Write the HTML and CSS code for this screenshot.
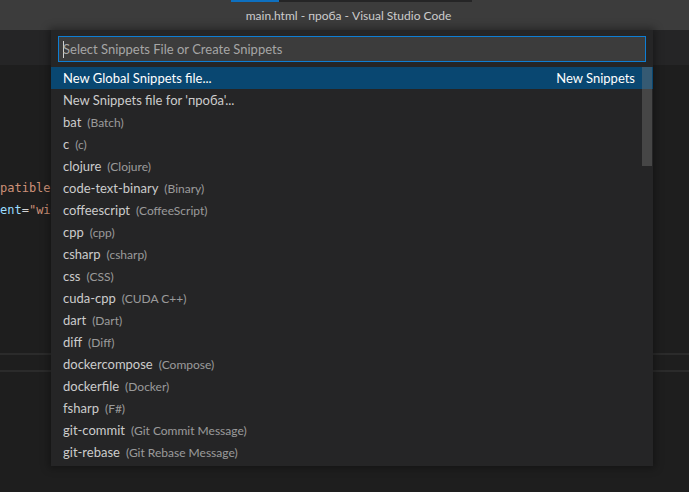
FILE: index.html
```html
<!DOCTYPE html>
<html>
<head>
<meta charset="utf-8">
<link rel="stylesheet" href="styles.css">
</head>
<body>
<div class="window">
  <header class="titlebar">
    <div class="strip"><span class="strip-active"></span></div>
    <div class="title">main.html - проба - Visual Studio Code</div>
  </header>
  <div class="tabbar"></div>
  <main class="editor">
    <div class="code">
      <div class="line"><span class="str">patible"</span></div>
      <div class="line"><span class="attr">ent</span><span class="op">=</span><span class="str">"wid</span></div>
    </div>
  </main>
  <div class="panel-sep"></div>
  <div class="panel-head"></div>
  <div class="panel-sep"></div>
  <div class="panel"></div>

  <div class="quick-input">
    <div class="input-box">
      <span class="caret"></span><span class="placeholder">Select Snippets File or Create Snippets</span>
    </div>
    <div class="list">
      <div class="row selected"><span class="label">New Global Snippets file...</span><span class="sep-label">New Snippets</span></div>
      <div class="row"><span class="label">New Snippets file for 'проба'...</span></div>
      <div class="row"><span class="label">bat</span><span class="desc">(Batch)</span></div>
      <div class="row"><span class="label">c</span><span class="desc">(c)</span></div>
      <div class="row"><span class="label">clojure</span><span class="desc">(Clojure)</span></div>
      <div class="row"><span class="label">code-text-binary</span><span class="desc">(Binary)</span></div>
      <div class="row"><span class="label">coffeescript</span><span class="desc">(CoffeeScript)</span></div>
      <div class="row"><span class="label">cpp</span><span class="desc">(cpp)</span></div>
      <div class="row"><span class="label">csharp</span><span class="desc">(csharp)</span></div>
      <div class="row"><span class="label">css</span><span class="desc">(CSS)</span></div>
      <div class="row"><span class="label">cuda-cpp</span><span class="desc">(CUDA C++)</span></div>
      <div class="row"><span class="label">dart</span><span class="desc">(Dart)</span></div>
      <div class="row"><span class="label">diff</span><span class="desc">(Diff)</span></div>
      <div class="row"><span class="label">dockercompose</span><span class="desc">(Compose)</span></div>
      <div class="row"><span class="label">dockerfile</span><span class="desc">(Docker)</span></div>
      <div class="row"><span class="label">fsharp</span><span class="desc">(F#)</span></div>
      <div class="row"><span class="label">git-commit</span><span class="desc">(Git Commit Message)</span></div>
      <div class="row"><span class="label">git-rebase</span><span class="desc">(Git Rebase Message)</span></div>
      <div class="scroll-slider"></div>
    </div>
  </div>
</div>
</body>
</html>
```
FILE: styles.css
```css
html, body {
  margin: 0;
  padding: 0;
  background: #1e1e1e;
}
.window {
  position: relative;
  width: 689px;
  height: 492px;
  overflow: hidden;
  display: flex;
  flex-direction: column;
  font-family: Lato, "Noto Sans", sans-serif;
}
.titlebar {
  height: 30px;
  background: #3c3c3c;
  display: flex;
  flex-direction: column;
  flex: none;
}
.strip {
  margin-left: 231px;
  width: 241px;
  height: 2px;
  background: #252526;
  display: flex;
}
.strip-active {
  width: 48px;
  background: #0e70c0;
}
.title {
  flex: 1;
  display: flex;
  align-items: center;
  justify-content: center;
  color: #cccccc;
  font-size: 12px;
  padding-bottom: 2px;
  padding-left: 8px;
}
.tabbar {
  height: 35px;
  background: #252526;
  flex: none;
}
.editor {
  height: 288px;
  flex: none;
  background: #1e1e1e;
  padding-top: 112px;
  box-sizing: border-box;
}
.code {
  font-family: "DejaVu Sans Mono", monospace;
  font-size: 12px;
}
.line {
  height: 22px;
  line-height: 22px;
  white-space: pre;
}
.str { color: #ce9178; }
.attr { color: #9cdcfe; }
.op { color: #d4d4d4; }
.panel-sep {
  height: 2px;
  background: #2b2b2b;
  flex: none;
}
.panel-head {
  height: 15px;
  background: #1e1e1e;
  flex: none;
}
.panel {
  flex: 1;
  background: #1e1e1e;
}
.quick-input {
  position: absolute;
  left: 51px;
  top: 30px;
  width: 602px;
  background: #252526;
  box-shadow: 0 0 8px 2px rgba(0, 0, 0, 0.36);
  padding: 6px 0 3px 0;
  box-sizing: border-box;
}
.input-box {
  margin: 0 7px;
  height: 26px;
  box-sizing: border-box;
  border: 1px solid #0e7ed4;
  background: #3c3c3c;
  display: flex;
  align-items: center;
  padding-left: 4px;
  font-size: 13px;
}
.caret {
  width: 1px;
  height: 17px;
  background: #d0d0d0;
  margin-right: -1px;
}
.placeholder {
  color: #a6a6a6;
}
.list {
  position: relative;
  margin-top: 5px;
}
.row {
  height: 22px;
  display: flex;
  align-items: center;
  padding: 0 18px 0 12px;
  font-size: 13px;
  color: #cccccc;
}
.row.selected {
  background: #094771;
  color: #ffffff;
}
.desc {
  margin-left: 6px;
  font-size: 12px;
  opacity: 0.7;
}
.sep-label {
  margin-left: auto;
  color: #ffffff;
}
.scroll-slider {
  position: absolute;
  right: 1px;
  top: 0;
  width: 10px;
  height: 99px;
  background: rgba(121, 121, 121, 0.4);
}
```
